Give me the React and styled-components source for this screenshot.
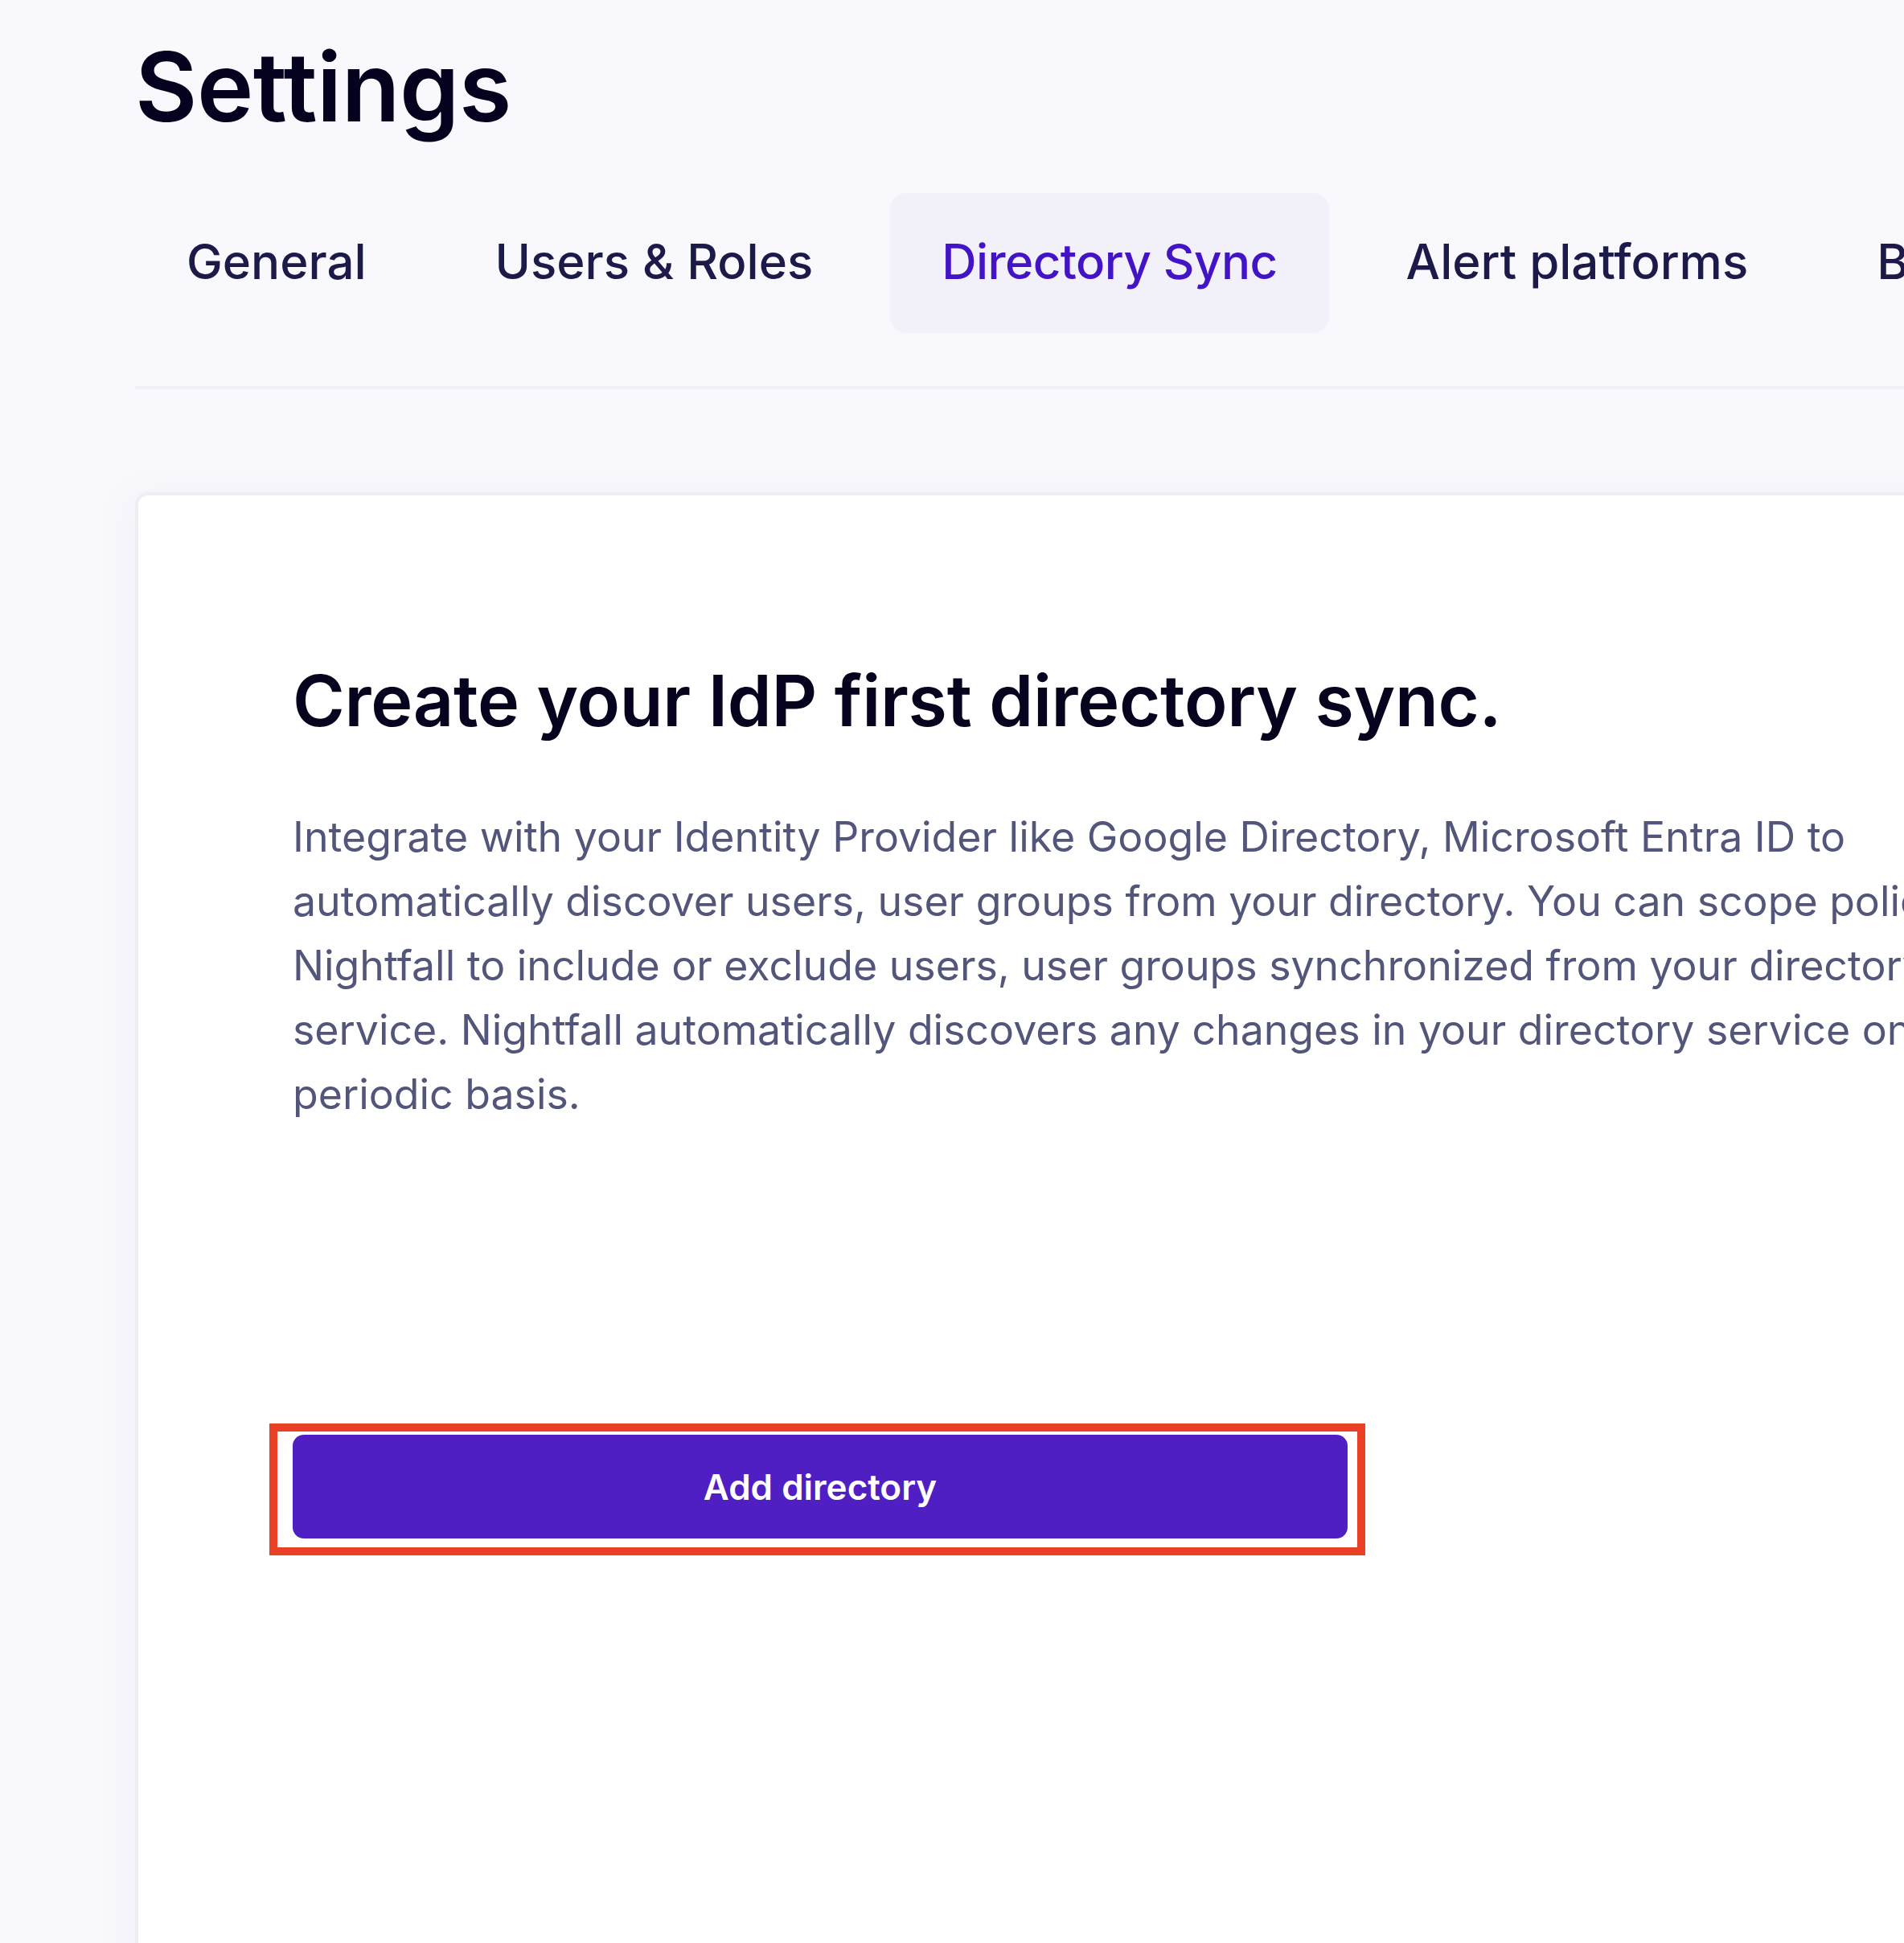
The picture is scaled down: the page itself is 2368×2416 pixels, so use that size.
import React from "react";
import styled, { createGlobalStyle } from "styled-components";

const GlobalStyle = createGlobalStyle`
    html, body {
        margin: 0;
        padding: 0;
        background: #f9f9fd;
        overflow: hidden;
    }
    * {
        box-sizing: border-box;
    }
`;

const tabs = ["General", "Users & Roles", "Directory Sync", "Alert platforms", "Billing"];

const lines = [
    "Integrate with your Identity Provider like Google Directory, Microsoft Entra ID to",
    "automatically discover users, user groups from your directory. You can scope policies in",
    "Nightfall to include or exclude users, user groups synchronized from your directory",
    "service. Nightfall automatically discovers any changes in your directory service on a",
    "periodic basis.",
];

export default function App() {
    return (
        <>
            <GlobalStyle />
            <Page>
                <Main>
                    <Title>Settings</Title>
                    <TabBar>
                        {tabs.map((t) => (
                            <Tab key={t} active={t === "Directory Sync"}>
                                {t}
                            </Tab>
                        ))}
                    </TabBar>
                    <Card>
                        <Heading>Create your IdP first directory sync.</Heading>
                        <Description>
                            {lines.map((l) => (
                                <Line key={l}>{l}</Line>
                            ))}
                        </Description>
                        <ButtonWrap>
                            <PrimaryButton>Add directory</PrimaryButton>
                            <Highlight />
                        </ButtonWrap>
                    </Card>
                </Main>
            </Page>
        </>
    );
}

const Page = styled.div`
    width: 2368px;
    height: 2416px;
    overflow: hidden;
    background: #f9f9fd;
    font-family: Inter, "Noto Sans", sans-serif;
`;

const Main = styled.div`
    width: 2700px;
    padding-left: 168px;
    padding-top: 48px;
`;

const Title = styled.h1`
    margin: 0;
    font-size: 119px;
    line-height: 120px;
    font-weight: 600;
    letter-spacing: -0.5px;
    color: #04021f;
`;

const TabBar = styled.div`
    display: flex;
    gap: 32px;
    margin-top: 72px;
    padding-bottom: 66px;
    border-bottom: 4px solid #f0eff6;
`;

const Tab = styled.div`
    display: flex;
    align-items: center;
    height: 174px;
    padding: 0 64px 4px;
    border-radius: 20px;
    font-size: 60px;
    line-height: 72px;
    font-weight: 500;
    letter-spacing: ${(props) => (props.active ? "-0.55px" : "0")};
    white-space: nowrap;
    color: ${(props) => (props.active ? "#4313c6" : "#1c1a48")};
    background: ${(props) => (props.active ? "#f2f1f9" : "transparent")};
`;

const Card = styled.div`
    margin-top: 128px;
    min-height: 1900px;
    padding: 202px 0 0 192px;
    background: #ffffff;
    border: 4px solid #efeef5;
    border-right: none;
    border-bottom: none;
    border-top-left-radius: 16px;
    box-shadow: -12px 0 48px rgba(60, 50, 140, 0.04);
`;

const Heading = styled.h2`
    margin: 0;
    font-size: 88px;
    line-height: 106px;
    font-weight: 600;
    letter-spacing: -0.3px;
    color: #05031e;
`;

const Description = styled.p`
    margin: 76px 0 0 0;
    font-size: 51.8px;
    line-height: 80px;
    font-weight: 400;
    color: #53567b;
`;

const Line = styled.span`
    display: block;
    white-space: nowrap;
`;

const ButtonWrap = styled.div`
    position: relative;
    width: 1312px;
    margin-top: 384px;
`;

const PrimaryButton = styled.button`
    display: flex;
    align-items: center;
    justify-content: center;
    width: 100%;
    height: 129px;
    border: none;
    border-radius: 14px;
    background: #4f1fc3;
    color: #ffffff;
    font-family: Inter, "Noto Sans", sans-serif;
    font-size: 44px;
    font-weight: 600;
    cursor: pointer;
`;

const Highlight = styled.div`
    position: absolute;
    top: -14px;
    left: -29px;
    right: -22px;
    bottom: -21px;
    border: 10px solid #ea4026;
    pointer-events: none;
`;
